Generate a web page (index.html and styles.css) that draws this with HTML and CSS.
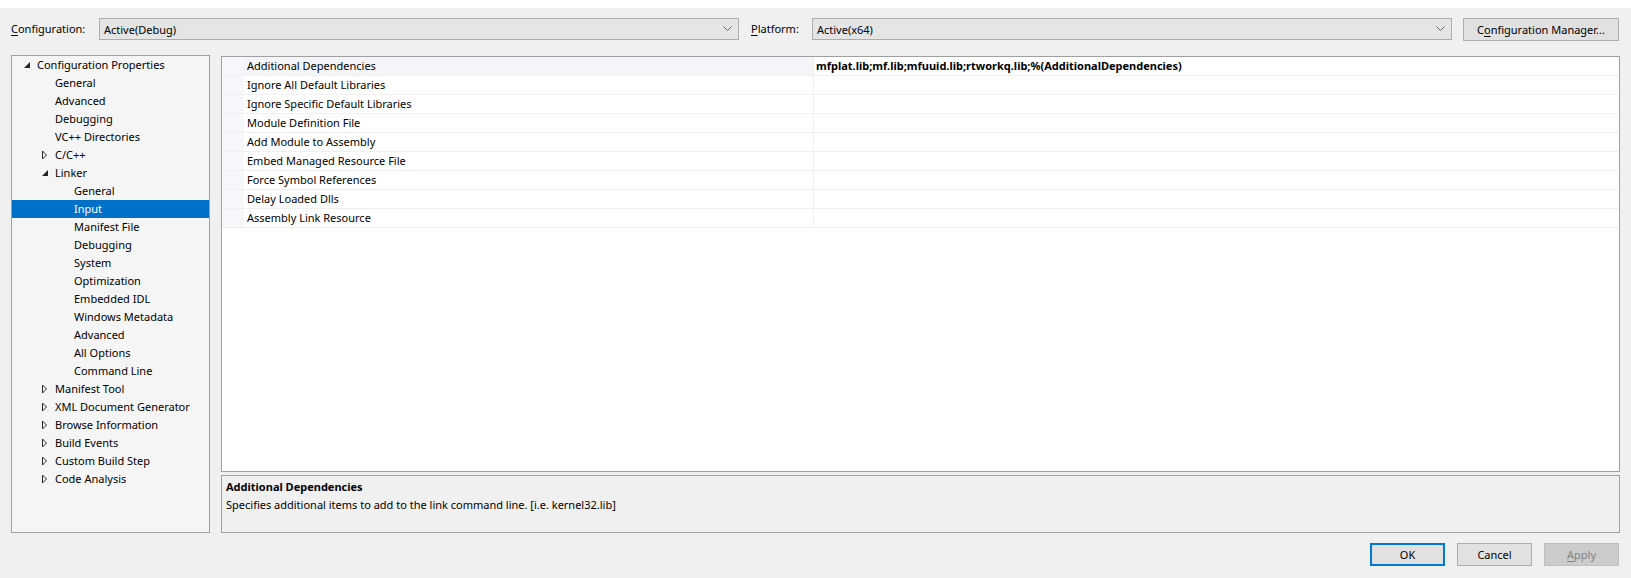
FILE: index.html
```html
<!DOCTYPE html>
<html lang="en">
<head>
    <meta charset="UTF-8">
    <title>Input Property Pages</title>
    <link rel="stylesheet" href="styles.css">
</head>
<body>
    <div class="top-strip"></div>

    <div class="toolbar">
        <label class="tb-label cfg-label"><u>C</u>onfiguration:</label>
        <div class="combo">
            <span>Active(Debug)</span>
            <svg class="chev" width="9" height="6" viewBox="0 0 9 6"><path d="M0.5 0.5 L4.5 4.5 L8.5 0.5" fill="none" stroke="#606060" stroke-width="1"/></svg>
        </div>
        <label class="tb-label plat-label"><u>P</u>latform:</label>
        <div class="combo">
            <span>Active(x64)</span>
            <svg class="chev" width="9" height="6" viewBox="0 0 9 6"><path d="M0.5 0.5 L4.5 4.5 L8.5 0.5" fill="none" stroke="#606060" stroke-width="1"/></svg>
        </div>
        <button class="btn cfg-mgr">C<u>o</u>nfiguration Manager...</button>
    </div>

    <div class="main">
        <div class="tree" id="tree"></div>

        <div class="right-col">
            <div class="grid">
                <div class="grid-rows" id="gridRows"></div>
            </div>
            <div class="desc">
                <div class="desc-title">Additional Dependencies</div>
                <div class="desc-text">Specifies additional items to add to the link command line. [i.e. kernel32.lib]</div>
            </div>
        </div>
    </div>

    <div class="footer">
        <button class="btn btn-ok">OK</button>
        <button class="btn">Cancel</button>
        <button class="btn btn-disabled"><u>A</u>pply</button>
    </div>

    <script>
        // tree: [label, level, state]  state: open / closed / leaf
        const treeItems = [
            ['Configuration Properties', 0, 'open'],
            ['General', 1, 'leaf'],
            ['Advanced', 1, 'leaf'],
            ['Debugging', 1, 'leaf'],
            ['VC++ Directories', 1, 'leaf'],
            ['C/C++', 1, 'closed'],
            ['Linker', 1, 'open'],
            ['General', 2, 'leaf'],
            ['Input', 2, 'leaf', true],
            ['Manifest File', 2, 'leaf'],
            ['Debugging', 2, 'leaf'],
            ['System', 2, 'leaf'],
            ['Optimization', 2, 'leaf'],
            ['Embedded IDL', 2, 'leaf'],
            ['Windows Metadata', 2, 'leaf'],
            ['Advanced', 2, 'leaf'],
            ['All Options', 2, 'leaf'],
            ['Command Line', 2, 'leaf'],
            ['Manifest Tool', 1, 'closed'],
            ['XML Document Generator', 1, 'closed'],
            ['Browse Information', 1, 'closed'],
            ['Build Events', 1, 'closed'],
            ['Custom Build Step', 1, 'closed'],
            ['Code Analysis', 1, 'closed']
        ];

        const openIcon = '<svg width="8" height="8" viewBox="0 0 8 8"><path d="M7 1 L7 7 L1 7 Z" fill="#262626"/></svg>';
        const closedIcon = '<svg width="8" height="10" viewBox="0 0 8 10"><path d="M1.5 1 L5.5 5 L1.5 9 Z" fill="none" stroke="#262626" stroke-width="1"/></svg>';

        const tree = document.getElementById('tree');
        treeItems.forEach(([label, level, state, selected]) => {
            const row = document.createElement('div');
            row.className = 'tree-row lvl-' + level + (selected ? ' selected' : '');
            let icon = '';
            if (state === 'open') icon = openIcon;
            if (state === 'closed') icon = closedIcon;
            row.innerHTML = `<span class="twisty">${icon}</span><span class="tree-text">${label}</span>`;
            tree.appendChild(row);
        });

        const props = [
            ['Additional Dependencies', 'mfplat.lib;mf.lib;mfuuid.lib;rtworkq.lib;%(AdditionalDependencies)'],
            ['Ignore All Default Libraries', ''],
            ['Ignore Specific Default Libraries', ''],
            ['Module Definition File', ''],
            ['Add Module to Assembly', ''],
            ['Embed Managed Resource File', ''],
            ['Force Symbol References', ''],
            ['Delay Loaded Dlls', ''],
            ['Assembly Link Resource', '']
        ];

        const gridRows = document.getElementById('gridRows');
        props.forEach(([name, value], i) => {
            const row = document.createElement('div');
            row.className = 'prop-row' + (i === 0 ? ' current' : '');
            row.innerHTML = `<span class="gutter"></span><span class="prop-name">${name}</span><span class="prop-value">${value}</span>`;
            gridRows.appendChild(row);
        });
    </script>
</body>
</html>
```

FILE: styles.css
```css
* { margin: 0; padding: 0; box-sizing: border-box; }
body {
    font-family: 'Noto Sans', 'Open Sans', sans-serif;
    font-size: 11px;
    color: #000;
    background: #f0f0f0;
    width: 1631px;
    height: 578px;
    overflow: hidden;
}
u { text-decoration: underline; text-underline-offset: 2px; }

.top-strip { height: 8px; background: #fff; }

.toolbar {
    display: flex;
    align-items: center;
    height: 34px;
    padding: 0 11px;
    margin-top: 4px;
}
.tb-label { line-height: 22px; }
.cfg-label { width: 88px; }
.plat-label { width: 61px; margin-left: 12px; }
.combo {
    width: 640px;
    height: 22px;
    background: #e5e5e5;
    border: 1px solid #adadad;
    display: flex;
    align-items: center;
    justify-content: space-between;
    padding: 0 6px 0 4px;
}
.btn {
    font-family: inherit;
    font-size: 11px;
    color: #000;
    background: #e1e1e1;
    border: 1px solid #adadad;
    height: 23px;
    width: 75px;
}
.cfg-mgr { width: 156px; margin-left: 11px; }

.main {
    display: flex;
    gap: 11px;
    padding: 0 11px;
    height: 478px;
    margin-top: 9px;
}
.tree {
    width: 199px;
    background: #f5f5f5;
    border: 1px solid #a0a0a0;
}
.tree-row {
    height: 18px;
    display: flex;
    align-items: center;
    line-height: 18px;
}
.tree-row.selected { background: #0070c9; color: #fff; }
.twisty {
    width: 12px;
    display: flex;
    align-items: center;
}
.lvl-0 { padding-left: 11px; }
.lvl-1 { padding-left: 29px; }
.lvl-2 { padding-left: 48px; }
.tree-text { margin-left: 2px; }

.right-col {
    flex: 1;
    display: flex;
    flex-direction: column;
    gap: 3px;
    padding-top: 1px;
}
.grid {
    height: 416px;
    background: #fff;
    border: 1px solid #a0a0a0;
}
.prop-row {
    display: flex;
    height: 19px;
    border-bottom: 1px solid #f0f0f0;
    line-height: 18px;
}
.gutter { width: 22px; background: #f5f7fb; }
.prop-name { width: 570px; padding-left: 3px; border-right: 1px solid #f0f0f0; }
.prop-value { padding-left: 2px; font-weight: bold; }
.prop-row.current .prop-name { background: #f3f5f9; }

.desc {
    height: 58px;
    background: #f0f0f0;
    border: 1px solid #a0a0a0;
    padding: 2px 4px;
}
.desc-title { font-weight: bold; line-height: 18px; }
.desc-text { line-height: 17px; }

.footer {
    display: flex;
    justify-content: flex-end;
    gap: 12px;
    padding: 10px 12px 0 0;
}
.btn-ok { border: 2px solid #0078d7; }
.btn-disabled { background: #cccccc; border-color: #bfbfbf; color: #838383; }
```
